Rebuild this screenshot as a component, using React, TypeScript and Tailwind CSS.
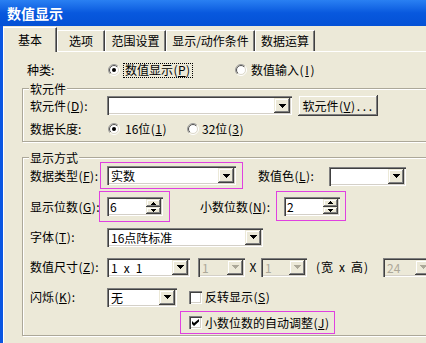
import React from "react";

const sunken =
  "shadow-[inset_1px_1px_0_#808080,inset_2px_2px_0_#404040,inset_-1px_-1px_0_#ffffff,inset_-2px_-2px_0_#d4d0c8]";
const raised =
  "shadow-[inset_-1px_-1px_0_#404040,inset_1px_1px_0_#ece9d8,inset_-2px_-2px_0_#808080,inset_2px_2px_0_#ffffff]";

function Mn({ k }: { k: string }) {
  return (
    <span className="inline-flex shrink-0">
      <span className="inline-block w-[5px] text-center">(</span>
      <span className="inline-block min-w-[6px] text-center underline">{k}</span>
      <span className="inline-block w-[5px] text-center">)</span>
    </span>
  );
}

function H({ t }: { t: string }) {
  return (
    <span className="inline-flex shrink-0">
      {t.split("").map((c, i) => (
        <span key={i} className="inline-block min-w-[6px] text-center">
          {c}
        </span>
      ))}
    </span>
  );
}

function DownArrow({ color = "#000" }: { color?: string }) {
  return (
    <svg width="7" height="4" viewBox="0 0 7 4" className="shrink-0">
      <path d="M0 0h7v1h-1v1h-1v1h-1v1h-1v-1h-1v-1h-1v-1h-1z" fill={color} />
    </svg>
  );
}

function SmallArrow({ up }: { up?: boolean }) {
  return (
    <svg width="5" height="3" viewBox="0 0 5 3" className="shrink-0">
      <path
        d={up ? "M2 0h1v1h1v1h1v1h-5v-1h1v-1h1z" : "M0 0h5v1h-1v1h-1v1h-1v-1h-1v-1h-1z"}
        fill="#000"
      />
    </svg>
  );
}

function Combo({
  w,
  children,
  disabled,
}: {
  w: string;
  children?: React.ReactNode;
  disabled?: boolean;
}) {
  return (
    <div
      className={`flex h-[19px] shrink-0 p-[2px] ${sunken} ${w} ${
        disabled ? "bg-[#ece9d8]" : "bg-white"
      }`}
    >
      <div
        className={`flex-1 min-w-0 pl-[2px] leading-[15px] flex items-center whitespace-pre ${
          disabled ? "text-[#aca899]" : "text-black"
        }`}
      >
        {children}
      </div>
      <div
        className={`w-[16px] h-[15px] shrink-0 bg-[#ece9d8] ${raised} flex items-center justify-center`}
      >
        <DownArrow color={disabled ? "#aca899" : "#000"} />
      </div>
    </div>
  );
}

function Spin({ value }: { value: string }) {
  return (
    <div className={`flex h-[19px] w-[56px] shrink-0 p-[2px] bg-white ${sunken}`}>
      <div className="flex-1 pl-[1px] leading-[15px]">{value}</div>
      <div className="w-[15px] h-[15px] flex flex-col">
        <div className={`h-[8px] bg-[#ece9d8] ${raised} flex items-center justify-center`}>
          <SmallArrow up />
        </div>
        <div className={`h-[7px] bg-[#ece9d8] ${raised} flex items-center justify-center`}>
          <SmallArrow />
        </div>
      </div>
    </div>
  );
}

function Radio({ checked }: { checked?: boolean }) {
  return (
    <svg width="12" height="12" viewBox="0 0 12 12" className="shrink-0">
      <defs>
        <linearGradient id="ro" x1="0" y1="0" x2="1" y2="1">
          <stop offset="0.5" stopColor="#9a9a9a" />
          <stop offset="0.5" stopColor="#ffffff" />
        </linearGradient>
        <linearGradient id="ri" x1="0" y1="0" x2="1" y2="1">
          <stop offset="0.5" stopColor="#505050" />
          <stop offset="0.5" stopColor="#dcd9cc" />
        </linearGradient>
      </defs>
      <circle cx="6" cy="6" r="5.5" fill="none" stroke="url(#ro)" />
      <circle cx="6" cy="6" r="4.5" fill="#fff" stroke="url(#ri)" />
      {checked && <circle cx="6" cy="6" r="2" fill="#000" />}
    </svg>
  );
}

function Check({ checked }: { checked?: boolean }) {
  return (
    <div className={`w-[13px] h-[13px] shrink-0 bg-white ${sunken} flex items-center justify-center`}>
      {checked && (
        <svg width="7" height="7" viewBox="0 0 7 7">
          <path d="M0 2L2 4L7 0L7 2.5L2 7L0 5Z" fill="#000" />
        </svg>
      )}
    </div>
  );
}

function Tab({
  children,
  w,
  selected,
}: {
  children: React.ReactNode;
  w: string;
  selected?: boolean;
}) {
  if (selected) {
    return (
      <div
        className={`${w} h-[25px] mb-[-1px] relative z-10 bg-[#ece9d8] border-t border-l border-white shadow-[inset_-1px_0_0_#808080] border-r border-r-[#404040] flex items-center justify-center shrink-0`}
      >
        {children}
      </div>
    );
  }
  return (
    <div
      className={`${w} h-[21px] bg-[#ece9d8] border-t border-l border-white shadow-[inset_-1px_0_0_#808080] border-r border-r-[#404040] flex items-center justify-center shrink-0`}
    >
      {children}
    </div>
  );
}

const etched =
  "border border-[#aca899] shadow-[inset_1px_1px_0_#ffffff,1px_1px_0_#ffffff]";

const lbl = "shrink-0 flex items-center whitespace-nowrap";

export default function App() {
  return (
    <div className="w-[426px] h-[343px] overflow-hidden bg-[#ece9d8] flex flex-col font-['Noto_Sans_CJK_SC','Noto_Sans',sans-serif] text-[12px] text-black leading-none whitespace-nowrap">
      {/* Title bar */}
      <div className="h-[26px] shrink-0 bg-gradient-to-b from-[#2a80f2] via-[#0858de] to-[#0451d5] flex items-center pl-[7px]">
        <span className="text-white font-bold text-[14px]">数值显示</span>
      </div>
      <div className="flex flex-1 min-h-0">
        <div className="w-[3px] shrink-0 bg-[#0a56e2]" />
        <div className="flex-1 flex flex-col min-w-0">
          {/* Tabs */}
          <div className="h-[25px] shrink-0 flex items-end relative z-10">
            <Tab selected w="w-[54px]">基本</Tab>
            <Tab w="w-[48px]">选项</Tab>
            <Tab w="w-[61px]">范围设置</Tab>
            <Tab w="w-[89px]">显示/动作条件</Tab>
            <Tab w="w-[60px]">数据运算</Tab>
          </div>
          {/* Panel */}
          <div className="flex-1 w-[440px] border-t border-l border-white flex flex-col">
            {/* 种类 */}
            <div className="mt-[9px] h-[18px] pl-[23px] flex items-center">
              <div className={`w-[81px] ${lbl}`}>种类:</div>
              <div className="w-[127px] shrink-0 flex items-center">
                <Radio checked />
                <span className="ml-[3px] px-[1px] h-[15px] flex items-center border border-dotted border-black">
                  数值显示<Mn k="P" />
                </span>
              </div>
              <div className="flex items-center">
                <Radio />
                <span className="ml-[4px] flex items-center">
                  数值输入<Mn k="I" />
                </span>
              </div>
            </div>

            {/* Group 软元件 */}
            <div className={`mt-[9px] ml-[18px] w-[430px] relative ${etched} pt-[6px] pb-[3px] pl-[7px]`}>
              <span className="absolute top-[-8px] left-[6px] px-[1px] bg-[#ece9d8] leading-[16px]">
                软元件
              </span>
              <div className="h-[21px] flex items-center">
                <div className={`w-[77px] ${lbl}`}>
                  软元件<Mn k="D" />:
                </div>
                <Combo w="w-[185px]" />
                <div
                  className={`ml-[6px] w-[80px] h-[21px] shrink-0 bg-[#ece9d8] ${raised} flex items-center justify-center`}
                >
                  软元件<Mn k="V" />
                  <H t="..." />
                </div>
              </div>
              <div className="mt-[4px] h-[18px] flex items-center">
                <div className={`w-[78px] ${lbl}`}>数据长度:</div>
                <div className="w-[79px] shrink-0 flex items-center">
                  <Radio checked />
                  <span className="ml-[5px] flex items-center">
                    <H t="16" />位<Mn k="1" />
                  </span>
                </div>
                <div className="flex items-center">
                  <Radio />
                  <span className="ml-[3px] flex items-center">
                    <H t="32" />位<Mn k="3" />
                  </span>
                </div>
              </div>
            </div>

            {/* Group 显示方式 */}
            <div className={`mt-[15px] ml-[18px] w-[430px] relative ${etched} pt-[3px] pb-[1px] pl-[7px]`}>
              <span className="absolute top-[-8px] left-[6px] px-[1px] bg-[#ece9d8] leading-[16px]">
                显示方式
              </span>
              {/* Row A */}
              <div className="h-[30px] flex items-start">
                <div className={`w-[70px] self-center ${lbl}`}>
                  数据类型<Mn k="F" />:
                </div>
                <div className="mt-[1px] w-[143px] h-[27px] shrink-0 border border-[#e040e0] pl-[6px] flex items-center">
                  <Combo w="w-[129px]">实数</Combo>
                </div>
                <div className={`ml-[15px] w-[71px] self-center ${lbl}`}>
                  数值色<Mn k="L" />:
                </div>
                <div className="self-center">
                  <Combo w="w-[77px]" />
                </div>
              </div>
              {/* Row B */}
              <div className="h-[32px] flex items-start">
                <div className={`w-[69px] self-center ${lbl}`}>
                  显示位数<Mn k="G" />:
                </div>
                <div className="w-[71px] h-[31px] shrink-0 border border-[#e040e0] pl-[7px] flex items-center">
                  <Spin value="6" />
                </div>
                <div className={`ml-[30px] w-[76px] self-center ${lbl}`}>
                  小数位数<Mn k="N" />:
                </div>
                <div className="w-[70px] h-[30px] shrink-0 border border-[#e040e0] pl-[7px] flex items-center">
                  <Spin value="2" />
                </div>
              </div>
              {/* Row C */}
              <div className="h-[28px] flex items-center">
                <div className={`w-[77px] ${lbl}`}>
                  字体<Mn k="T" />:
                </div>
                <Combo w="w-[156px]">
                  <H t="16" />点阵标准
                </Combo>
              </div>
              {/* Row D */}
              <div className="h-[32px] flex items-center">
                <div className={`w-[77px] ${lbl}`}>
                  数值尺寸<Mn k="Z" />:
                </div>
                <Combo w="w-[83px]">
                  <H t="1 x 1" />
                </Combo>
                <div className="ml-[8px] shrink-0">
                  <Combo w="w-[47px]" disabled>
                    1
                  </Combo>
                </div>
                <div className="ml-[4px] w-[8px] shrink-0 text-center">X</div>
                <div className="ml-[4px] shrink-0">
                  <Combo w="w-[46px]" disabled>
                    1
                  </Combo>
                </div>
                <div className={`ml-[8px] w-[60px] ${lbl}`}>
                  <H t="(" />宽<H t=" x " />高<H t=")" />
                </div>
                <div className="ml-[8px] shrink-0">
                  <Combo w="w-[50px]" disabled>
                    24
                  </Combo>
                </div>
              </div>
              {/* Row E */}
              <div className="h-[28px] flex items-center">
                <div className={`w-[77px] ${lbl}`}>
                  闪烁<Mn k="K" />:
                </div>
                <Combo w="w-[70px]">无</Combo>
                <div className="ml-[12px] flex items-center">
                  <Check />
                  <span className="ml-[3px] flex items-center">
                    反转显示<Mn k="S" />
                  </span>
                </div>
              </div>
              {/* Row F */}
              <div className="h-[23px] flex items-center">
                <div className="ml-[150px] w-[155px] h-[23px] shrink-0 border border-[#e040e0] pl-[8px] flex items-center">
                  <Check checked />
                  <span className="ml-[3px] flex items-center">
                    小数位数的自动调整<Mn k="J" />
                  </span>
                </div>
              </div>
            </div>
          </div>
        </div>
      </div>
    </div>
  );
}
